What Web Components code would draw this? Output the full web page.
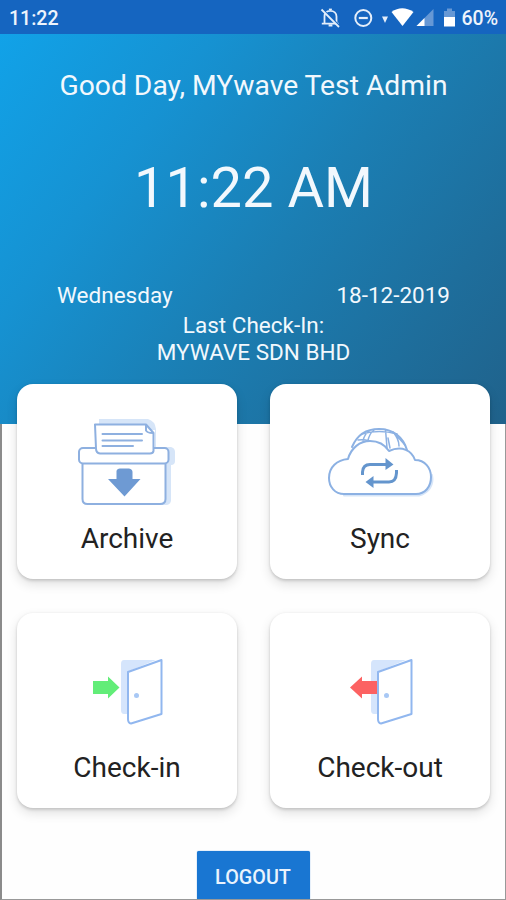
<!DOCTYPE html>
<html lang="en"><head><meta charset="utf-8"><title>MYwave Attendance</title>
<style>
html,body{margin:0;height:900px;overflow:hidden;background:#fefefe;font-family:Roboto,"Liberation Sans",sans-serif}
</style></head><body>
<attendance-screen></attendance-screen>
<script>
const define=(name,html)=>customElements.define(name,class extends HTMLElement{
  connectedCallback(){
    if(this.shadowRoot)return;
    this.attachShadow({mode:'open'}).innerHTML=html;
  }
});

define('status-bar',`<style>
:host{display:flex;height:34px;background:#1565c0;color:#eef4fc;align-items:center;justify-content:space-between;padding:2px 8px 0 9px;box-sizing:border-box;font-size:19.5px;font-weight:500}
.right{display:flex;align-items:center}
svg{display:block;margin-right:3px}
</style>
<span>11:22</span>
<div class="right">
<svg width="138" height="24" viewBox="320 6 138 24" fill="none" stroke="#e4eefa" stroke-width="1.8">
 <path d="M324.5 23.2V16.5C324.5 12.8 327 10.8 330.4 10.8S336.5 13 336.5 16.5V23.2M321.8 23.6H338.6"/>
 <path d="M330.4 10V8.6" stroke-width="3"/><path d="M328.6 25.4H332.4" stroke-width="2.2"/>
 <path d="M323 10L340.5 27" stroke="#1565c0" stroke-width="2"/><path d="M321.5 9.5L339 27"/>
 <circle cx="363.3" cy="18" r="8" stroke-width="2"/><path d="M358.8 18H367.8" stroke-width="2.2"/>
 <g stroke="none"><path d="M382 16.500H388L385 23Z" fill="#e4eefa"/>
 <path d="M391.500 12Q402 4.500 413.500 12L402.500 26Z" fill="#fff"/>
 <path d="M433.500 9V26H416.500Z" fill="#6698d5"/><path d="M424.500 18V26H416.500Z" fill="#fff"/>
 <path d="M444 11H447V8.500H452V11H455V17H444Z" fill="#6698d5"/><path d="M444 17H455V26.500H444Z" fill="#fff"/></g>
</svg><span>60%</span></div>`);

define('greeting-panel',`<style>
:host{display:block;height:390px;box-sizing:border-box;padding-top:35px;color:#f2f8fd;text-align:center;background:linear-gradient(127deg,#11a2e8 0%,#1692d2 27%,#1b7eb3 55%,#1e6e9c 80%,#20628b 100%)}
div{white-space:nowrap}
.hello{font-size:28.25px;line-height:34px;padding-left:1px}
.time{font-size:56px;line-height:68px;margin-top:51px;padding-left:1px}
.date{display:flex;justify-content:space-between;padding:0 56px 0 57px;font-size:22.5px;line-height:28px;margin-top:59px}
.last{font-size:22.5px;line-height:26.5px;margin-top:3px;padding-left:1px}
</style>
<div class="hello"><span>Good Day, MYwave Test Admin</span></div>
<div class="time"><span>11:22 AM</span></div>
<div class="date"><span>Wednesday</span><span>18-12-2019</span></div>
<div class="last"><span>Last Check-In:</span><br><span>MYWAVE SDN BHD</span></div>`);

define('menu-card',`<style>
:host{display:flex;flex-direction:column;align-items:center;box-sizing:border-box;height:195px;background:#fff;border-radius:16px;box-shadow:0 2px 3px rgba(0,0,0,.13),0 5px 12px rgba(0,0,0,.12),0 0 3px rgba(0,0,0,.05);color:#222;font-size:28px;line-height:34px}
.icon{height:138px;width:220px}
::slotted(svg){display:block}
</style><div class="icon"><slot name="icon"></slot></div><span><slot></slot></span>`);

define('action-button',`<style>
:host{display:block;width:113px;height:48px;box-sizing:border-box;padding-top:1px;background:#1976d2;color:#eaf3fd;border-radius:2px 2px 0 0;text-align:center;font-size:19.8px;line-height:52px;font-weight:500;box-shadow:0 0 1px #1976d2}
</style><span><slot></slot></span>`);

define('attendance-screen',`<style>
:host{display:block;position:relative;width:506px;height:900px;overflow:hidden;background:#fefefe}
main{display:grid;grid-template-columns:220px 220px;gap:34px 33px;padding-left:17px;margin-top:-40px}
footer{display:flex;justify-content:center;margin-top:43px;height:49px}
.frame{position:absolute;inset:424px 0 0 0;border-left:2px solid #8b8b8b;border-right:1px solid #999;border-bottom:1px solid #999;pointer-events:none}
</style>
<div class="frame"></div>
<status-bar></status-bar><greeting-panel></greeting-panel>
<main>
<menu-card><svg slot="icon" width="220" height="138" viewBox="17 384 220 138" fill="none" stroke="#8eb0e0" stroke-width="2" stroke-linejoin="round" stroke-linecap="round">
 <path d="M99 419H148Q155 421 156 429V447H171Q175 448 175 452V461Q175 465 171 465V501Q170 505 166 505H155V430H99Z" fill="#d6e5f8" stroke="none"/>
 <path d="M82.500 463.500V499Q82.500 504 87.500 504H160Q165.500 504 165.500 499V463.500" fill="#fff"/>
 <rect x="79" y="448" width="89.500" height="15.500" rx="4" fill="#fff"/>
 <path d="M95 424.500H146L153.500 433V451Q153 453.500 150 453.500H100Q96 453 96 448.500Z" fill="#fff"/>
 <path d="M146 425V430.500Q147 433 153 433M102.500 434H142M102.500 440.500H142M102.500 446H133"/>
 <path d="M116.500 471Q117 468.500 120 468.500H129Q132.500 469 132.500 472V479H140.500L124.500 496.500L108 479H116.500Z" fill="#6e9ad3" stroke="none"/>
</svg>Archive</menu-card>
<menu-card><svg slot="icon" width="220" height="138" viewBox="270 384 220 138" fill="none" stroke="#8cb1e3" stroke-width="2" stroke-linejoin="round" stroke-linecap="round">
 <path d="M344 495.500H419C429 493 434 485 432 475Z" fill="#d6e5f8" stroke="#d6e5f8"/>
 <path d="M352 447C357 435 366 429 379 429C393 429 403 437 407 450" fill="#fff"/>
 <g stroke-width="1.500"><path d="M358 440Q364 439 369 441M362 434Q379 429 397 434M369 431Q364 435 363 441M374 430Q369 434 368 441M385.500 429.500L387 448M393 432Q399 439 399 446M390 448L388 438M396 435L405 445"/></g>
 <path d="M344 494C335 494 329 487 329 478C329 467 337 460 348 459C351 448 360 441 370 441C379 441 385 445 389 451C402 445 412 451 415 460C425 460 431 468 431 477C431 487 425 494 416 494Z" fill="#fff"/>
 <g stroke="#6495cd" stroke-width="3" stroke-linecap="butt"><path d="M362.500 475V472Q363 464.500 370 464.500H386M396.500 470V473Q396 482 389 482H373"/></g>
 <path d="M385.500 458L393.500 464.500L385.500 470ZM373.500 476L365.500 482L373.500 488Z" fill="#6495cd" stroke="none"/>
</svg>Sync</menu-card>
<menu-card><svg slot="icon" width="220" height="138" viewBox="17 613 220 138" fill="none" stroke="#91b7ef" stroke-width="2" stroke-linejoin="round">
 <path d="M124 660H156L129 671V714H124Q121 714 121 710V664Q121 660 124 660Z" fill="#d5e5fc" stroke="none"/>
 <path d="M128 672L161.500 660V714L131 723.500Q128 723 128 719Z" fill="#fff"/>
 <circle cx="136.500" cy="695.500" r="2.500" fill="#a8c8f5" stroke="none"/>
 <path d="M93 681H108V676.500L119.500 687.500L108 698.500V694H93Z" fill="#62ed78" stroke="none"/>
</svg>Check-in</menu-card>
<menu-card><svg slot="icon" width="220" height="138" viewBox="270 613 220 138" fill="none" stroke="#91b7ef" stroke-width="2" stroke-linejoin="round">
 <path d="M374 660H406L379 671V714H374Q371 714 371 710V664Q371 660 374 660Z" fill="#d5e5fc" stroke="none"/>
 <path d="M350 687.500L362 676.500V681H377V694H362V698.500Z" fill="#fc6262" stroke="none"/>
 <path d="M378 672L411.500 660V714L381 723.500Q378 723 378 719Z" fill="#fff"/>
 <circle cx="386.500" cy="695.500" r="2.500" fill="#a8c8f5" stroke="none"/>
</svg>Check-out</menu-card>
</main>
<footer><action-button>LOGOUT</action-button></footer>`);
</script></body></html>
